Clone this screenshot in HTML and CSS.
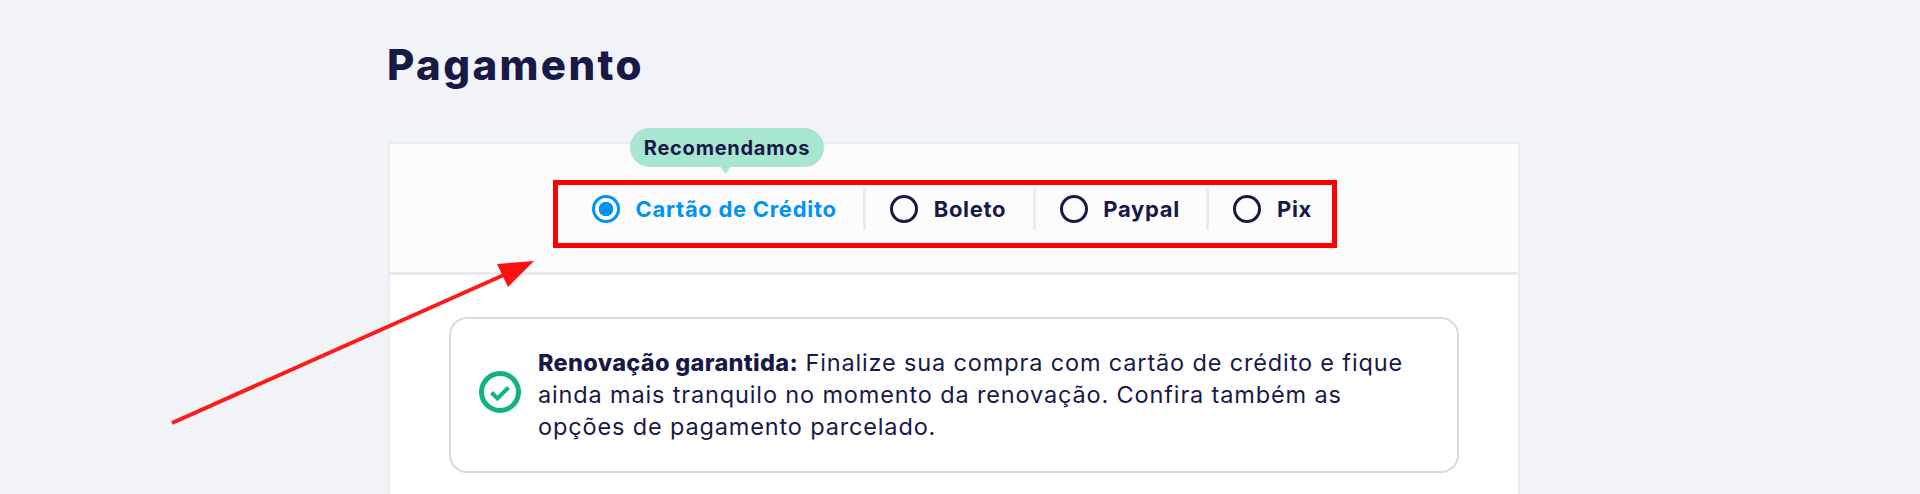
FILE: index.html
```html
<!DOCTYPE html>
<html lang="pt-BR">
<head>
<meta charset="utf-8">
<title>Pagamento</title>
<link rel="stylesheet" href="styles.css">
</head>
<body>
<main class="page">
  <h1 class="title">Pagamento</h1>
  <section class="card">
    <div class="methods">
      <label class="method method-active">
        <span class="tip">Recomendamos</span>
        <span class="radio radio-on"></span>
        <span class="method-name">Cartão de Crédito</span>
      </label>
      <label class="method">
        <span class="radio"></span>
        <span class="method-name">Boleto</span>
      </label>
      <label class="method">
        <span class="radio"></span>
        <span class="method-name">Paypal</span>
      </label>
      <label class="method method-last">
        <span class="radio"></span>
        <span class="method-name">Pix</span>
      </label>
    </div>
    <div class="card-body">
      <div class="notice">
        <svg class="notice-icon" viewBox="0 0 42 42" aria-hidden="true">
          <circle cx="21" cy="21" r="18.5" fill="none" stroke="#0fb678" stroke-width="5"/>
          <path d="M12.5 21.5l6 6 11-11" fill="none" stroke="#0fb678" stroke-width="4"/>
        </svg>
        <p class="notice-text"><strong>Renovação garantida:</strong> Finalize sua compra com cartão de crédito e fique<br>ainda mais tranquilo no momento da renovação. Confira também as<br>opções de pagamento parcelado.</p>
      </div>
    </div>
  </section>
</main>
<div class="mark-box"></div>
<svg class="mark-arrow" viewBox="0 0 1920 494" aria-hidden="true">
  <line x1="172" y1="423" x2="506" y2="274" stroke="#ff1a1a" stroke-width="4"/>
  <polygon points="497,264 534,261 508,287" fill="#ff0f0f"/>
</svg>
</body>
</html>
```
FILE: styles.css
```css
* { box-sizing: border-box; }
html, body { margin: 0; height: 494px; overflow: hidden; }
body {
  background: #f1f3f7;
  color: #171a47;
  font-family: Inter, "Liberation Sans", sans-serif;
}
.page { width: 1132px; margin-left: 388px; }
.title {
  margin: 0 0 0 -1px;
  padding-top: 39px;
  height: 142px;
  font-size: 42px;
  line-height: 52px;
  font-weight: 800;
  letter-spacing: 2.4px;
}
.card {
  background: #fff;
  border: 2px solid #e6edf2;
  border-bottom: 0;
  height: 352px;
}
.methods {
  display: flex;
  align-items: center;
  height: 131px;
  padding: 2px 0 0 178px;
  background: #fcfcfd;
  border-bottom: 3px solid #e6edf2;
}
.method {
  position: relative;
  display: flex;
  align-items: center;
  gap: 15.5px;
  height: 42px;
  padding: 0 26.5px 0 24px;
  border-right: 3px solid #e6edf2;
  font-size: 22px;
  font-weight: 700;
  letter-spacing: 0.7px;
}
.method-last { border-right: 0; }
.method-active { color: #0095f5; }
.radio {
  width: 28px;
  height: 28px;
  border-radius: 50%;
  border: 3.7px solid #171a47;
}
.radio-on {
  border-color: #0095f5;
  background: radial-gradient(circle, #0095f5 0 7px, #fff 7.5px);
}
.tip {
  position: absolute;
  left: 62px;
  top: -60px;
  width: 194px;
  height: 39px;
  border-radius: 20px;
  background: #a8e6d2;
  color: #171a47;
  font-size: 20px;
  letter-spacing: 0.75px;
  line-height: 40px;
  text-align: center;
}
.tip::after {
  content: "";
  position: absolute;
  left: 90px;
  top: 35px;
  width: 11px;
  height: 11px;
  background: #a8e6d2;
  clip-path: polygon(0 30%, 100% 30%, 50% 100%);
}
.card-body { padding: 42px 59px 0; }
.notice {
  display: flex;
  align-items: center;
  gap: 17px;
  height: 156px;
  padding: 0 0 0 28px;
  border: 2px solid #cfdde5;
  border-radius: 18px;
}
.notice-icon { width: 42px; height: 42px; flex: none; margin-bottom: 7px; }
.notice-text {
  margin: 0;
  font-size: 23.5px;
  line-height: 32px;
  font-weight: 400;
  letter-spacing: 0.85px;
  white-space: nowrap;
}
.notice-text strong { font-weight: 800; letter-spacing: 0.3px; }
.mark-box {
  position: absolute;
  left: 553px;
  top: 180px;
  width: 784px;
  height: 68px;
  border: 5px solid #ff0000;
}
.mark-arrow {
  position: absolute;
  left: 0;
  top: 0;
  width: 1920px;
  height: 494px;
}
```
